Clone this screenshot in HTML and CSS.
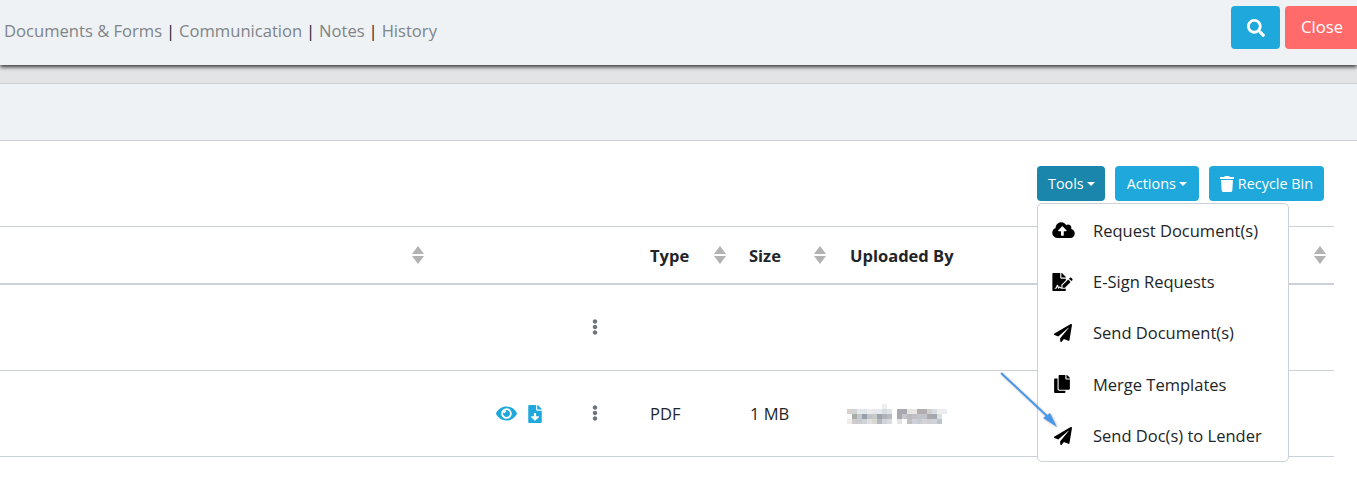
FILE: index.html
```html
<!DOCTYPE html>
<html lang="en">
<head>
<meta charset="utf-8">
<title>Documents &amp; Forms</title>
<link rel="stylesheet" href="styles.css">
</head>
<body>
<svg class="defs" aria-hidden="true">
  <symbol id="i-plane" viewBox="0 0 512 512"><path d="M476 3.2L12.5 270.6c-18.1 10.4-15.8 35.6 2.2 43.2L121 358.4l287.3-253.2c5.5-4.9 13.3 2.6 8.6 8.3L176 407v80.5c0 23.6 28.5 32.9 42.5 15.8L282 426l124.6 52.2c14.2 6 30.4-2.9 33-18.2l72-432C515 7.8 493.3-6.8 476 3.2z"/></symbol>
  <symbol id="i-kebab" viewBox="0 0 192 512"><path d="M96 184c39.8 0 72 32.2 72 72s-32.2 72-72 72-72-32.2-72-72 32.2-72 72-72zM24 80c0 39.8 32.2 72 72 72s72-32.2 72-72S135.8 8 96 8 24 40.2 24 80zm0 352c0 39.8 32.2 72 72 72s72-32.2 72-72-32.2-72-72-72-72 32.2-72 72z"/></symbol>
  <symbol id="i-sort" viewBox="0 0 12 18"><path d="M6 0l6 8H0zM6 18l6-8H0z"/></symbol>
</svg>

<header class="topbar">
  <nav class="tabs">
    <a class="tab">Documents &amp; Forms</a><span class="sep">|</span><a class="tab">Communication</a><span class="sep">|</span><a class="tab">Notes</a><span class="sep">|</span><a class="tab">History</a>
  </nav>
  <div class="top-actions">
    <button class="btn-search" aria-label="Search">
      <svg class="icon-search" viewBox="0 0 512 512"><path d="M505 442.7L405.3 343c-4.5-4.5-10.6-7-17-7H372c27.6-35.3 44-79.7 44-128C416 93.1 322.9 0 208 0S0 93.1 0 208s93.1 208 208 208c48.3 0 92.7-16.4 128-44v16.3c0 6.4 2.5 12.5 7 17l99.7 99.7c9.4 9.4 24.6 9.4 33.9 0l28.3-28.3c9.4-9.4 9.4-24.6.1-34zM208 336c-70.7 0-128-57.2-128-128 0-70.7 57.2-128 128-128 70.7 0 128 57.2 128 128 0 70.7-57.2 128-128 128z"/></svg>
    </button>
    <button class="btn-close">Close</button>
  </div>
</header>
<div class="shade"></div>
<div class="subbar"></div>

<main class="content">
  <div class="toolbar">
    <div class="dropdown">
      <button class="btn btn-active">Tools<span class="caret"></span></button>
      <ul class="menu">
        <li class="menu-item">
          <span class="menu-icon"><svg class="mi-cloud" viewBox="0 0 640 512"><path d="M537.6 226.6c4.1-10.7 6.4-22.4 6.4-34.6 0-53-43-96-96-96-19.7 0-38.1 6-53.3 16.2C367 64.2 315.3 32 256 32c-88.4 0-160 71.6-160 160 0 2.7.1 5.4.2 8.1C40.2 219.8 0 273.2 0 336c0 79.5 64.5 144 144 144h368c70.7 0 128-57.3 128-128 0-61.9-44-113.6-102.4-125.4zM393.4 288H328v112c0 8.8-7.2 16-16 16h-48c-8.8 0-16-7.2-16-16V288h-65.4c-14.3 0-21.4-17.2-11.3-27.3l105.4-105.4c6.2-6.2 16.4-6.2 22.6 0l105.4 105.4c10.1 10.1 2.9 27.3-11.3 27.3z"/></svg></span>
          Request Document(s)
        </li>
        <li class="menu-item">
          <span class="menu-icon"><svg class="mi-sign" viewBox="0 0 576 512"><path d="M218.17 424.14c-2.95-5.92-8.09-6.52-10.17-6.52s-7.22.59-10.02 6.19l-7.67 15.34c-6.37 12.78-25.03 11.37-29.48-2.09L144 386.59l-10.61 31.88c-5.89 17.66-22.38 29.53-41 29.53H80c-8.84 0-16-7.16-16-16s7.16-16 16-16h12.39c4.83 0 9.11-3.08 10.64-7.66l18.19-54.64c3.3-9.81 12.44-16.41 22.78-16.41s19.48 6.59 22.77 16.41l13.88 41.64c19.75-16.19 54.06-9.7 66 14.16 1.89 3.78 5.49 5.95 9.36 6.26v-82.12l128-127.09V160H248c-13.2 0-24-10.8-24-24V0H24C10.7 0 0 10.7 0 24v464c0 13.3 10.7 24 24 24h336c13.3 0 24-10.7 24-24v-40l-128-.11c-16.12-.31-30.58-9.28-37.83-23.75zM384 121.9c0-6.3-2.5-12.4-7-16.9L279.1 7c-4.5-4.5-10.6-7-17-7H256v128h128v-6.1zm-96 225.06V416h68.99l161.68-162.78-67.88-67.88L288 346.96zm280.54-179.63l-31.87-31.87c-9.94-9.94-26.07-9.94-36.01 0l-27.25 27.25 67.88 67.88 27.25-27.25c9.95-9.94 9.95-26.07 0-36.01z"/></svg></span>
          E-Sign Requests
        </li>
        <li class="menu-item">
          <span class="menu-icon"><svg class="mi-plane"><use href="#i-plane"/></svg></span>
          Send Document(s)
        </li>
        <li class="menu-item">
          <span class="menu-icon"><svg class="mi-copy" viewBox="0 0 448 512"><path d="M320 448v40c0 13.255-10.745 24-24 24H24c-13.255 0-24-10.745-24-24V120c0-13.255 10.745-24 24-24h72v296c0 30.879 25.121 56 56 56h168zm0-344V0H152c-13.255 0-24 10.745-24 24v368c0 13.255 10.745 24 24 24h272c13.255 0 24-10.745 24-24V128H344c-13.2 0-24-10.8-24-24zm120.971-31.029L375.029 7.029A24 24 0 0 0 358.059 0H352v96h96v-6.059a24 24 0 0 0-7.029-16.97z"/></svg></span>
          Merge Templates
        </li>
        <li class="menu-item">
          <span class="menu-icon"><svg class="mi-plane"><use href="#i-plane"/></svg></span>
          Send Doc(s) to Lender
        </li>
      </ul>
    </div>
    <button class="btn btn-actions">Actions<span class="caret"></span></button>
    <button class="btn">
      <svg class="icon-trash" viewBox="0 0 448 512"><path d="M432 32H312l-9.4-18.7A24 24 0 0 0 281.1 0H166.8a23.72 23.72 0 0 0-21.4 13.3L136 32H16A16 16 0 0 0 0 48v32a16 16 0 0 0 16 16h416a16 16 0 0 0 16-16V48a16 16 0 0 0-16-16zM53.2 467a48 48 0 0 0 47.9 45h245.8a48 48 0 0 0 47.9-45L416 128H32z"/></svg>Recycle Bin
    </button>
  </div>

  <div class="table">
    <div class="row row-head">
      <div class="cell cell-sort"><svg class="sort"><use href="#i-sort"/></svg></div>
      <div class="cell"></div>
      <div class="cell cell-sort">Type<svg class="sort"><use href="#i-sort"/></svg></div>
      <div class="cell cell-sort cell-size">Size<svg class="sort"><use href="#i-sort"/></svg></div>
      <div class="cell cell-sort cell-last">Uploaded By<svg class="sort"><use href="#i-sort"/></svg></div>
    </div>
    <div class="row">
      <div class="cell"></div>
      <div class="cell cell-actions"><svg class="kebab"><use href="#i-kebab"/></svg></div>
      <div class="cell"></div>
      <div class="cell"></div>
      <div class="cell"></div>
    </div>
    <div class="row">
      <div class="cell"></div>
      <div class="cell cell-actions">
        <svg class="icon-eye" viewBox="0 0 576 512"><path d="M572.52 241.4C518.29 135.59 410.93 64 288 64S57.68 135.64 3.48 241.41a32.35 32.35 0 0 0 0 29.19C57.71 376.41 165.07 448 288 448s230.32-71.64 284.52-177.41a32.35 32.35 0 0 0 0-29.19zM288 400a144 144 0 1 1 144-144 143.93 143.93 0 0 1-144 144zm0-240a95.31 95.31 0 0 0-25.31 3.79 47.85 47.85 0 0 1-66.9 66.9A95.78 95.78 0 1 0 288 160z"/></svg>
        <svg class="icon-file" viewBox="0 0 384 512"><path d="M224 136V0H24C10.7 0 0 10.7 0 24v464c0 13.3 10.7 24 24 24h336c13.3 0 24-10.7 24-24V160H248c-13.2 0-24-10.8-24-24zm76.45 211.36l-96.42 95.7c-6.65 6.61-17.39 6.61-24.04 0l-96.42-95.7C73.42 337.29 80.54 320 94.82 320H160v-80c0-8.84 7.16-16 16-16h32c8.84 0 16 7.16 16 16v80h65.18c14.28 0 21.4 17.29 11.27 27.36zM377 105L279.1 7c-4.5-4.5-10.6-7-17-7H256v128h128v-6.1c0-6.3-2.5-12.4-7-16.9z"/></svg>
        <svg class="kebab"><use href="#i-kebab"/></svg>
      </div>
      <div class="cell">PDF</div>
      <div class="cell">1 MB</div>
      <div class="cell">
        <svg class="mosaic" viewBox="0 0 100 20" shape-rendering="crispEdges" role="img" aria-label="Name obscured">
          <rect x="35" y="0" width="5" height="5" fill="#eceef0"/>
          <rect x="0" y="5" width="5" height="5" fill="#d8d0cc"/><rect x="5" y="5" width="5" height="5" fill="#cfd4d4"/><rect x="10" y="5" width="5" height="5" fill="#e4e8ec"/><rect x="15" y="5" width="5" height="5" fill="#dfe6ea"/><rect x="20" y="5" width="5" height="5" fill="#eeecea"/><rect x="25" y="5" width="5" height="5" fill="#e4e8ec"/><rect x="30" y="5" width="5" height="5" fill="#e6eaee"/><rect x="35" y="5" width="5" height="5" fill="#d8dce0"/><rect x="40" y="5" width="5" height="5" fill="#dfe4e8"/><rect x="50" y="5" width="5" height="5" fill="#a8a8b0"/><rect x="55" y="5" width="5" height="5" fill="#a8a8b0"/><rect x="60" y="5" width="5" height="5" fill="#e8e4e0"/><rect x="65" y="5" width="5" height="5" fill="#e8e6e4"/><rect x="70" y="5" width="5" height="5" fill="#b0aeb0"/><rect x="75" y="5" width="5" height="5" fill="#b0aeb0"/><rect x="80" y="5" width="5" height="5" fill="#d0d0d0"/><rect x="85" y="5" width="5" height="5" fill="#d8dce0"/><rect x="90" y="5" width="5" height="5" fill="#f0ece8"/><rect x="95" y="5" width="5" height="5" fill="#e8eef4"/>
          <rect x="0" y="10" width="5" height="5" fill="#fafafa"/><rect x="5" y="10" width="5" height="5" fill="#a8aca8"/><rect x="10" y="10" width="5" height="5" fill="#c4c8cc"/><rect x="15" y="10" width="5" height="5" fill="#98a0ac"/><rect x="20" y="10" width="5" height="5" fill="#c0c4cc"/><rect x="25" y="10" width="5" height="5" fill="#c8c8c8"/><rect x="30" y="10" width="5" height="5" fill="#9aa2ac"/><rect x="35" y="10" width="5" height="5" fill="#b0b4b8"/><rect x="40" y="10" width="5" height="5" fill="#b8bcc0"/><rect x="50" y="10" width="5" height="5" fill="#a8a8ae"/><rect x="55" y="10" width="5" height="5" fill="#c8c8cc"/><rect x="60" y="10" width="5" height="5" fill="#b8bcc0"/><rect x="65" y="10" width="5" height="5" fill="#c0c0c4"/><rect x="70" y="10" width="5" height="5" fill="#c0c4c8"/><rect x="75" y="10" width="5" height="5" fill="#c0c4c8"/><rect x="80" y="10" width="5" height="5" fill="#aca8ac"/><rect x="85" y="10" width="5" height="5" fill="#a4a8b0"/><rect x="90" y="10" width="5" height="5" fill="#d8e0e4"/>
          <rect x="0" y="15" width="5" height="5" fill="#f0ece8"/><rect x="5" y="15" width="5" height="5" fill="#cccccc"/><rect x="10" y="15" width="5" height="5" fill="#c8ccd0"/><rect x="15" y="15" width="5" height="5" fill="#d0d4d8"/><rect x="20" y="15" width="5" height="5" fill="#e0e0e2"/><rect x="25" y="15" width="5" height="5" fill="#d8d8d4"/><rect x="30" y="15" width="5" height="5" fill="#b4b8bc"/><rect x="35" y="15" width="5" height="5" fill="#d0d4d8"/><rect x="40" y="15" width="5" height="5" fill="#d8dce0"/><rect x="50" y="15" width="5" height="5" fill="#e4e4e8"/><rect x="60" y="15" width="5" height="5" fill="#c0c0c4"/><rect x="65" y="15" width="5" height="5" fill="#d0d0d8"/><rect x="70" y="15" width="5" height="5" fill="#c8ccd0"/><rect x="75" y="15" width="5" height="5" fill="#d4d4d8"/><rect x="80" y="15" width="5" height="5" fill="#d0d0d4"/><rect x="85" y="15" width="5" height="5" fill="#d0d4d8"/><rect x="90" y="15" width="5" height="5" fill="#bcc4cc"/>
        </svg>
      </div>
    </div>
  </div>

  <svg class="arrow" viewBox="0 0 60 60" aria-hidden="true">
    <line x1="0" y1="1" x2="46" y2="44" stroke="#4a96e8" stroke-width="2"/>
    <path d="M56 55L42 46l7-5z" fill="#4a96e8"/>
  </svg>
</main>
</body>
</html>
```

FILE: styles.css
```css
* { box-sizing: border-box; }
html, body { margin: 0; height: 480px; overflow: hidden; background: #fff; }
body { font-family: "Open Sans", "Noto Sans", sans-serif; font-size: 16.5px; color: #212529; }
.defs { display: none; }
svg { fill: currentColor; display: block; }

.topbar {
  height: 65px;
  background: #eef2f5;
  display: flex;
  justify-content: space-between;
  box-shadow: 0 2px 4px #333;
  position: relative;
  padding-left: 4px;
}
.tabs { display: flex; align-items: center; height: 60px; font-size: 16.6px; color: #212529; }
.tab { color: #7f8488; }
.sep { margin: 0 3.9px; }
.top-actions { display: flex; gap: 5px; padding-top: 6px; }
.btn-search, .btn-close { border: 0; height: 43px; border-radius: 4px; color: #fff; padding: 0; font: inherit; }
.btn-search { width: 49px; background: #1fa8db; display: flex; align-items: center; justify-content: center; }
.icon-search { width: 18px; height: 18px; }
.btn-close { width: 72px; background: #ff6b6b; font-size: 16.7px; border-radius: 4px 0 0 4px; text-align: left; padding: 0 0 3px 16px; }

.shade { height: 19px; background: #e2e4e6; border-bottom: 1px solid #cfd2d4; }
.subbar { height: 57px; background: #eef2f5; border-bottom: 1px solid #ccd0d5; }

.content { position: relative; padding-right: 23px; }
.toolbar { display: flex; justify-content: flex-end; gap: 10px; padding: 25px 10px 25px 0; }
.btn {
  height: 35px;
  padding: 0 11px;
  border: 0;
  border-radius: 4px;
  background: #1fa8db;
  color: #fff;
  font: inherit;
  font-size: 14.4px;
  display: flex;
  align-items: center;
}
.btn-active { background: #1a86ab; padding-right: 10px; }
.btn-actions { padding: 0 12px; }
.caret { margin-left: 3px; border-top: 4px solid #fff; border-left: 4px solid transparent; border-right: 4px solid transparent; }
.icon-trash { width: 14px; height: 16px; margin-right: 4px; }

.dropdown { position: relative; }
.menu {
  position: absolute;
  top: 37px;
  left: 0;
  z-index: 5;
  width: 252px;
  height: 259px;
  margin: 0;
  padding: 0;
  list-style: none;
  background: #fff;
  border: 1px solid #ccd0d8;
  border-radius: 5px;
  display: grid;
  grid-auto-rows: 1fr;
}
.menu-item { display: flex; align-items: center; padding: 1px 0 0 14px; font-size: 16.5px; color: #212529; }
.menu-icon { width: 41px; display: flex; align-items: center; color: #000; }
.mi-cloud { width: 23px; height: 18px; }
.mi-sign { width: 21px; height: 18px; }
.mi-plane { width: 18px; height: 18px; margin-left: 2px; }
.mi-copy { width: 16px; height: 18px; margin-left: 2px; }

.table { border-top: 1px solid #ccd0d8; }
.row {
  display: grid;
  grid-template-columns: 438px 200px 100px 100px 496px;
  height: 86px;
  border-bottom: 1px solid #ccd0d8;
}
.row-head { height: 58px; border-bottom-width: 2px; font-weight: 700; }
.cell { display: flex; align-items: center; padding: 0 12px; }
.cell-sort { justify-content: space-between; }
.cell-sort:first-child { justify-content: flex-end; padding-right: 14px; }
.cell-size { padding-left: 11px; }
.cell-last { padding-right: 8px; }
.sort { width: 12px; height: 18px; color: #b2b2b2; }
.cell-actions { justify-content: flex-end; padding: 0 40px 0 0; }
.kebab { width: 6px; height: 16px; color: #6c757d; margin: 0 0 2px 50px; }
.icon-eye { width: 21px; height: 19px; color: #1fa8db; margin-right: 11px; }
.icon-file { width: 14px; height: 18px; color: #1fa8db; }
.mosaic { width: 100px; height: 20px; margin: 0 0 0 -3px; }

.arrow { position: absolute; left: 1001px; top: 231px; width: 60px; height: 60px; z-index: 6; overflow: visible; filter: drop-shadow(1px 1px 1px rgba(0,0,0,.25)); }
```
